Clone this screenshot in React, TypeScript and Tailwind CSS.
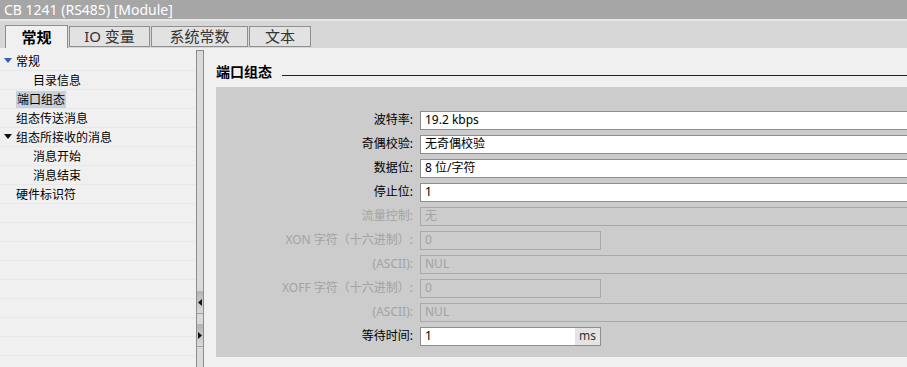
const cjk = { fontFamily: '"Noto Sans", "Noto Sans CJK SC", sans-serif' }

type Row = { label: string; value: string; disabled?: boolean; short?: boolean; unit?: string }

const rows: Row[] = [
  { label: '波特率:', value: '19.2 kbps' },
  { label: '奇偶校验:', value: '无奇偶校验' },
  { label: '数据位:', value: '8 位/字符' },
  { label: '停止位:', value: '1' },
  { label: '流量控制:', value: '无', disabled: true },
  { label: 'XON 字符（十六进制）:', value: '0', disabled: true, short: true },
  { label: '(ASCII):', value: 'NUL', disabled: true },
  { label: 'XOFF 字符（十六进制）:', value: '0', disabled: true, short: true },
  { label: '(ASCII):', value: 'NUL', disabled: true },
  { label: '等待时间:', value: '1', short: true, unit: 'ms' },
]

const tree = [
  { text: '常规', level: 1, arrow: 'blue' },
  { text: '目录信息', level: 2 },
  { text: '端口组态', level: 1, selected: true },
  { text: '组态传送消息', level: 1 },
  { text: '组态所接收的消息', level: 1, arrow: 'black' },
  { text: '消息开始', level: 2 },
  { text: '消息结束', level: 2 },
  { text: '硬件标识符', level: 1 },
]

function Tab({ label, active, w }: { label: string; active?: boolean; w: string }) {
  return (
    <div
      className={`${w} flex items-center justify-center border border-[#8f8f8f] text-[15px] ${
        active ? 'h-[23px] border-b-0 bg-[#f0f0f0] font-bold text-black' : 'h-[21px] mb-[1px] bg-[#e2e2e2] text-[#333]'
      }`}
    >
      {label}
    </div>
  )
}

function FormRow({ row }: { row: Row }) {
  const txt = row.disabled ? 'text-[#a3a3a3]' : 'text-black'
  return (
    <div className="flex h-[24px] items-center">
      <div className={`w-[197px] shrink-0 text-right text-[12px] ${txt}`}>{row.label}</div>
      <div
        className={`ml-[7px] flex h-[19px] shrink-0 items-center border text-[12px] ${
          row.short ? 'w-[181px]' : 'w-[600px]'
        } ${row.disabled ? 'border-[#a9a9a9] bg-[#cccccc] text-[#a3a3a3]' : 'border-[#8e8e8e] bg-white text-black'}`}
      >
        <span className="flex-1 pl-[4px]">{row.value}</span>
        {row.unit && (
          <span className="flex h-full w-[25px] items-center justify-center bg-[#e4e4e4] text-[#333]">{row.unit}</span>
        )}
      </div>
    </div>
  )
}

export default function App() {
  return (
    <div className="flex h-[367px] w-[907px] flex-col overflow-hidden bg-[#f0f0f0]" style={cjk}>
      <div className="flex h-[19px] shrink-0 items-center bg-[#a6a6a6] pl-[4px] text-[14px] text-white">
        CB 1241 (RS485) [Module]
      </div>
      <div className="flex h-[29px] shrink-0 items-end border-t-[2px] border-[#e6e6e6] bg-[#d7d7d7] pl-[5px]">
        <div className="flex items-end gap-[1px]">
          <Tab label="常规" active w="w-[63px]" />
          <Tab label="IO 变量" w="w-[81px]" />
          <Tab label="系统常数" w="w-[97px]" />
          <Tab label="文本" w="w-[62px]" />
        </div>
      </div>
      <div className="flex min-h-0 flex-1">
        {/* tree */}
        <div className="w-[196px] shrink-0 pt-[4px]">
          {Array.from({ length: 16 }).map((_, i) => {
            const t = tree[i]
            return (
              <div key={i} className="flex h-[19px] items-center border-b border-[#e8e8e8] text-[12px] text-black">
                {t && (
                  <>
                    <div className="flex w-[15px] shrink-0 justify-center">
                      {t.arrow && (
                        <svg width="8" height="6" viewBox="0 0 8 6">
                          <path d="M0 0 H8 L4 5 Z" fill={t.arrow === 'blue' ? '#3d5fb5' : '#111'} />
                        </svg>
                      )}
                    </div>
                    <span
                      className={`${t.level === 2 ? 'ml-[18px]' : 'ml-[1px]'} ${
                        t.selected ? 'bg-[#c8d0db] px-[1px]' : ''
                      } leading-[17px]`}
                    >
                      {t.text}
                    </span>
                  </>
                )}
              </div>
            )
          })}
        </div>
        {/* splitter */}
        <div className="mt-[2px] flex w-[8px] shrink-0 flex-col border-x border-t border-[#8c8c8c] bg-[#dadada]">
          <div className="h-[240px]" />
          <div className="flex h-[23px] items-center justify-center border-b border-[#a0a0a0] bg-gradient-to-b from-[#b4b4b4] to-[#dadada]">
            <svg width="4" height="7" viewBox="0 0 4 7">
              <path d="M4 0 V7 L0 3.5 Z" fill="#111" />
            </svg>
          </div>
          <div className="h-[10px]" />
          <div className="flex h-[23px] items-center justify-center border-b border-[#a0a0a0] bg-gradient-to-b from-[#b4b4b4] to-[#dadada]">
            <svg width="4" height="7" viewBox="0 0 4 7">
              <path d="M0 0 V7 L4 3.5 Z" fill="#111" />
            </svg>
          </div>
        </div>
        {/* content */}
        <div className="flex min-w-0 flex-1 flex-col pl-[12px]">
          <div className="flex h-[39px] shrink-0 items-center pt-[8px]">
            <span className="text-[14px] font-bold text-black">端口组态</span>
            <div className="ml-[10px] mt-[8px] h-[1px] flex-1 bg-[#222]" />
          </div>
          <div className="h-[270px] shrink-0 overflow-hidden bg-[#cccccc] pt-[21px]">
            {rows.map((r, i) => (
              <FormRow key={i} row={r} />
            ))}
          </div>
        </div>
      </div>
    </div>
  )
}
